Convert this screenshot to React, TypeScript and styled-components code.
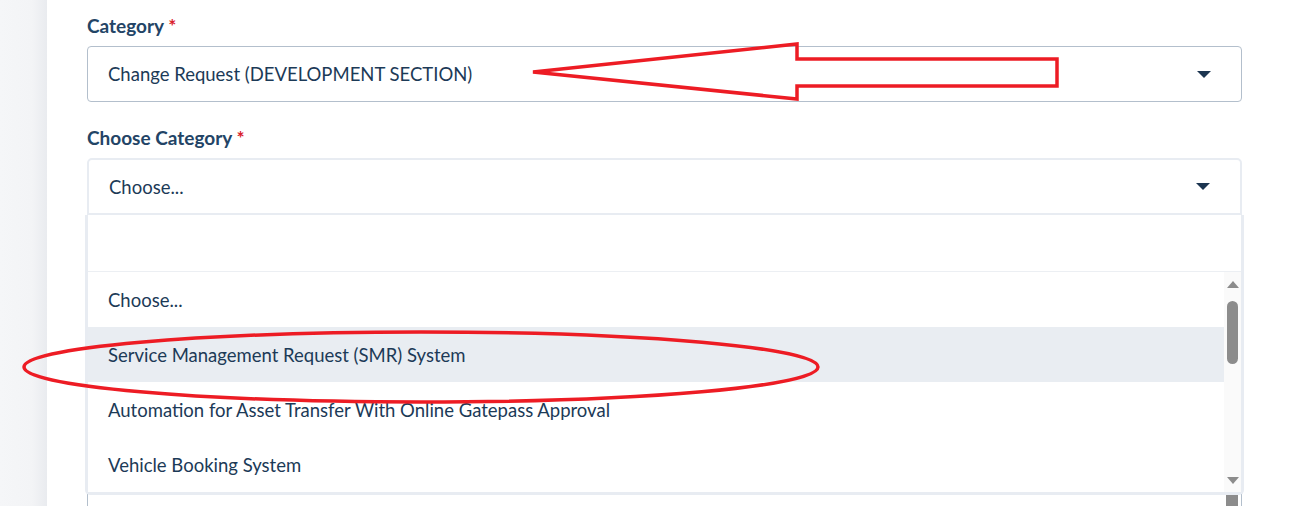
import styled, { createGlobalStyle } from "styled-components";

const GlobalStyle = createGlobalStyle`
  html, body {
    margin: 0;
    padding: 0;
    background: #ffffff;
    overflow: hidden;
  }
  body {
    font-family: "Lato", "Noto Sans", sans-serif;
    color: #1c3a57;
  }
`;

const options = [
  "Choose...",
  "Service Management Request (SMR) System",
  "Automation for Asset Transfer With Online Gatepass Approval",
  "Vehicle Booking System",
];

const Caret = () => (
  <svg width="14" height="7" viewBox="0 0 14 7">
    <path d="M0 0 H14 L7 7 Z" fill="#1c3550" />
  </svg>
);

const App = () => {
  return (
    <>
      <GlobalStyle />
      <Page>
        <Sidebar />
        <Main>
          <Label>
            Category <Star>*</Star>
          </Label>
          <Select>
            <Value>Change Request (DEVELOPMENT SECTION)</Value>
            <Caret />
          </Select>

          <Label>
            Choose Category <Star>*</Star>
          </Label>
          <SelectWrap>
            <Select $open>
              <Value>Choose...</Value>
              <Caret />
            </Select>
            <Dropdown>
              <Search />
              <ListRow>
                <List>
                  {options.map((o, i) => (
                    <Option key={o} $active={i === 1}>
                      {o}
                    </Option>
                  ))}
                </List>
                <Scrollbar>
                  <Arrow $up />
                  <Thumb />
                  <Spacer />
                  <Arrow />
                </Scrollbar>
              </ListRow>
            </Dropdown>
          </SelectWrap>

          <Label>
            Description <Star>*</Star>
          </Label>
          <TextBox>
            <Placeholder>Type your request details here</Placeholder>
            <BoxThumb />
          </TextBox>
        </Main>
        <Marks width="1316" height="506" viewBox="0 0 1316 506">
          <polygon
            points="533,72 797,44 797,59 1057,59 1057,86 797,86 797,99"
            fill="none"
            stroke="#ed1c24"
            strokeWidth="3.5"
            strokeLinejoin="miter"
          />
          <ellipse
            cx="421"
            cy="367"
            rx="397"
            ry="35"
            fill="none"
            stroke="#ed1c24"
            strokeWidth="3.5"
          />
        </Marks>
      </Page>
    </>
  );
};

const Page = styled.div`
  position: relative;
  display: flex;
  width: 1316px;
  height: 506px;
  overflow: hidden;
`;

const Sidebar = styled.div`
  width: 47px;
  flex-shrink: 0;
  background: linear-gradient(to right, #f5f6f8 0, #f3f4f6 32px, #e9ebef 47px);
`;

const Main = styled.div`
  flex: 1;
  padding: 13px 74px 0 40px;
`;

const Label = styled.div`
  font-size: 19px;
  font-weight: 700;
  line-height: 26px;
  color: #234466;
  margin-bottom: 7px;
`;

const Star = styled.span`
  color: #d9202b;
`;

const Select = styled.div<{ $open?: boolean }>`
  display: flex;
  align-items: center;
  justify-content: space-between;
  box-sizing: border-box;
  height: ${(p) => (p.$open ? "57px" : "56px")};
  padding: 0 30px 0 20px;
  border: ${(p) => (p.$open ? "2px solid #e8ecf2" : "1px solid #b3bfcc")};
  border-radius: ${(p) => (p.$open ? "5px 5px 0 0" : "4px")};
  margin-bottom: 23px;
  background: #ffffff;
`;

const SelectWrap = styled.div`
  position: relative;
  z-index: 2;
  & > ${Select} {
    margin-bottom: 0;
  }
  margin-bottom: 24px;
`;

const Value = styled.span`
  font-size: 18.5px;
  color: #1c3a57;
`;

const Dropdown = styled.div`
  position: absolute;
  top: 100%;
  left: -2px;
  right: -2px;
  background: #ffffff;
  border: 3px solid #e8ecf2;
  border-top: none;
  border-radius: 0 0 5px 5px;
`;

const Search = styled.div`
  height: 56px;
  border-bottom: 1px solid #eceff3;
`;

const ListRow = styled.div`
  display: flex;
`;

const List = styled.div`
  flex: 1;
`;

const Option = styled.div<{ $active?: boolean }>`
  height: 55px;
  display: flex;
  align-items: center;
  padding-left: 20px;
  font-size: 18.5px;
  color: #1c3a57;
  background: ${(p) => (p.$active ? "#e9edf2" : "#ffffff")};
`;

const Scrollbar = styled.div`
  width: 17px;
  display: flex;
  flex-direction: column;
  align-items: center;
  background: #fafafa;
  padding: 9px 0 8px;
  box-sizing: border-box;
`;

const Arrow = styled.div<{ $up?: boolean }>`
  width: 0;
  height: 0;
  border-left: 6px solid transparent;
  border-right: 6px solid transparent;
  ${(p) =>
    p.$up
      ? "border-bottom: 7px solid #8c8c8c;"
      : "border-top: 7px solid #8c8c8c;"}
`;

const Thumb = styled.div`
  width: 11px;
  height: 63px;
  margin-top: 13px;
  border-radius: 6px;
  background: #8c8c8c;
`;

const Spacer = styled.div`
  flex: 1;
`;

const TextBox = styled.div`
  position: relative;
  height: 300px;
  border: 1px solid #b3bfcc;
  border-radius: 4px;
  padding: 150px 20px 0;
  box-sizing: border-box;
`;

const Placeholder = styled.div`
  font-size: 18.5px;
  color: #8a96a3;
`;

const BoxThumb = styled.div`
  position: absolute;
  right: 3px;
  top: 160px;
  width: 12px;
  height: 80px;
  background: #8c8c8c;
`;

const Marks = styled.svg`
  position: absolute;
  left: 0;
  top: 0;
  pointer-events: none;
  z-index: 5;
`;

export default App;
